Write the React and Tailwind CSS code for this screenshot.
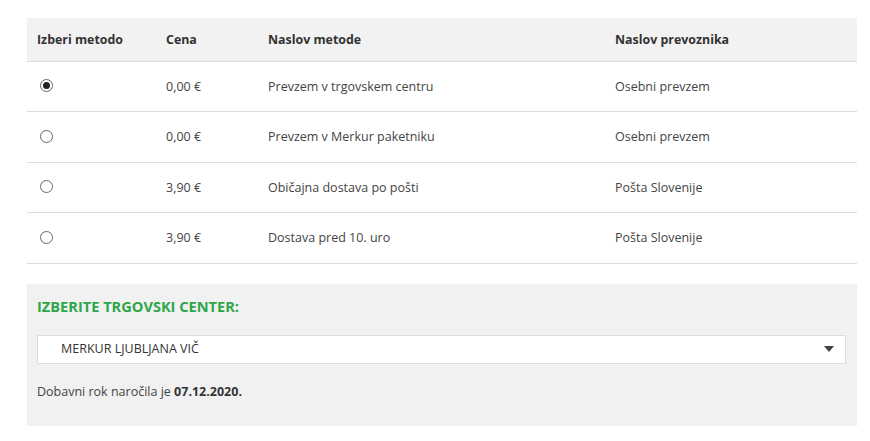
const methods = [
  { price: '0,00 €', name: 'Prevzem v trgovskem centru', carrier: 'Osebni prevzem' },
  { price: '0,00 €', name: 'Prevzem v Merkur paketniku', carrier: 'Osebni prevzem' },
  { price: '3,90 €', name: 'Običajna dostava po pošti', carrier: 'Pošta Slovenije' },
  { price: '3,90 €', name: 'Dostava pred 10. uro', carrier: 'Pošta Slovenije' },
]

export default function App() {
  return (
    <div className="min-h-screen bg-white px-[27px] pt-[18px] text-[#444] font-['Open_Sans',sans-serif] text-[12.5px]">
      <table className="w-[830px] border-collapse">
        <thead>
          <tr className="h-[43px] bg-[#f2f2f2] text-left text-[12.4px] font-bold text-[#333]">
            <th className="w-[129px] px-[10px] pt-[3px] border-b border-[#dcdcdc]">Izberi metodo</th>
            <th className="w-[102px] px-[10px] pt-[3px] border-b border-[#dcdcdc]">Cena</th>
            <th className="w-[347px] px-[10px] pt-[3px] border-b border-[#dcdcdc]">Naslov metode</th>
            <th className="px-[10px] pt-[3px] border-b border-[#dcdcdc]">Naslov prevoznika</th>
          </tr>
        </thead>
        <tbody>
          {methods.map((m, i) => (
            <tr key={i} className="h-[50.5px] border-b border-[#dcdcdc]">
              <td className="px-[10px] align-middle">
                <span className="ml-[3px] -mt-[1px] flex h-[13px] w-[13px] items-center justify-center rounded-full border border-[#666] bg-white">
                  {i === 0 && <span className="h-[7px] w-[7px] rounded-full bg-[#222]" />}
                </span>
              </td>
              <td className="px-[10px] pt-[2px]">{m.price}</td>
              <td className="px-[10px] pt-[2px]">{m.name}</td>
              <td className="px-[10px] pt-[2px]">{m.carrier}</td>
            </tr>
          ))}
        </tbody>
      </table>

      <div className="mt-[20px] h-[142px] w-[830px] bg-[#f1f1f1] px-[10px] pt-[12px]">
        <h3 className="text-[14.6px] font-bold text-[#2ea64a] leading-[20px]">IZBERITE TRGOVSKI CENTER:</h3>
        <div className="mt-[19px] flex h-[29px] w-[809px] items-center justify-between border border-[#dcdcdc] bg-white pl-[23px] pr-[10px] text-[12.5px] text-[#333]">
          <span>MERKUR LJUBLJANA VIČ</span>
          <svg width="10" height="6" viewBox="0 0 10 6" className="mr-[1px]">
            <path d="M0 0 L10 0 L5 6 Z" fill="#444" />
          </svg>
        </div>
        <p className="mt-[18px] leading-[20px]">
          Dobavni rok naročila je <b className="text-[#333]">07.12.2020.</b>
        </p>
      </div>
    </div>
  )
}
